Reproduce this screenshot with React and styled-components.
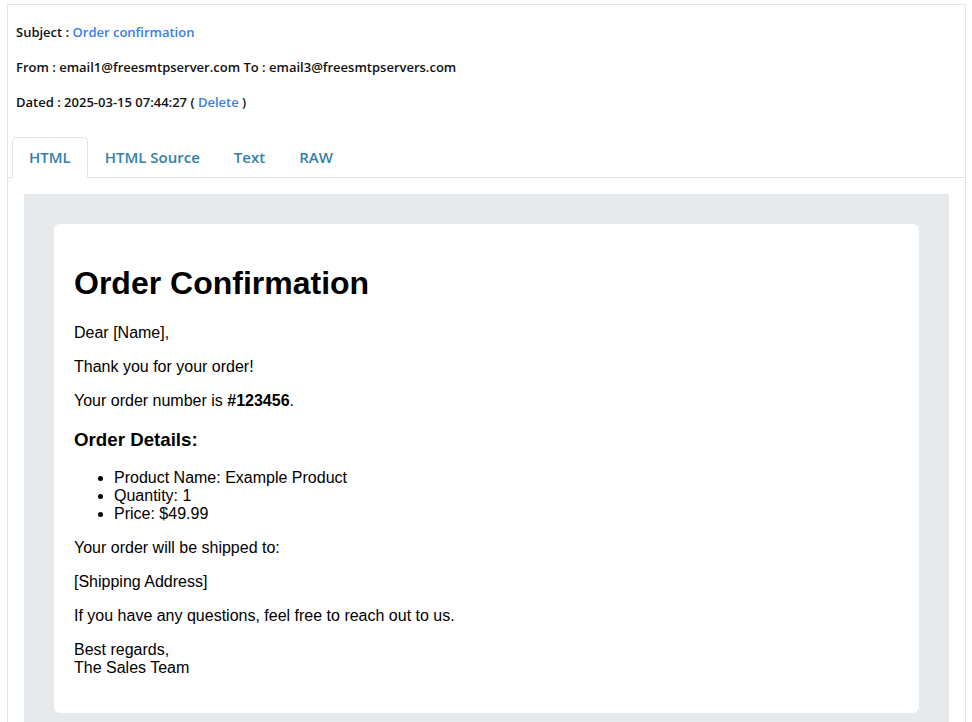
import React from "react";
import styled, { createGlobalStyle } from "styled-components";

const Global = createGlobalStyle`
  html, body { margin: 0; padding: 0; background: #fff; }
  body { font-family: "Open Sans", "Liberation Sans", sans-serif; }
  #root { padding: 4px 6px 0 7px; }
`;

const Panel = styled.div`
  border: 1px solid #e3e6e9;
  border-bottom: none;
  background: #fff;
`;

const Header = styled.div`
  padding: 10px 8px 0 8px;
  font-size: 13px;
  font-weight: 600;
  color: #111;
`;

const Line = styled.p`
  margin: 0;
  line-height: 35px;
  white-space: nowrap;
`;

const Link = styled.a`
  color: #3b7ded;
  text-decoration: none;
`;

const TabBar = styled.div`
  display: flex;
  margin-top: 17px;
  padding-left: 4px;
  border-bottom: 1px solid #e1e4e7;
`;

const Tab = styled.div`
  height: 41px;
  box-sizing: border-box;
  padding: 0 16px 1px 16px;
  display: flex;
  align-items: center;
  font-size: 15px;
  font-weight: 600;
  color: #3580a9;
  margin-bottom: -1px;
  border: 1px solid ${(p) => (p.$active ? "#e1e4e7" : "transparent")};
  border-bottom-color: ${(p) => (p.$active ? "#fff" : "transparent")};
  border-radius: 5px 5px 0 0;
  background: ${(p) => (p.$active ? "#fff" : "transparent")};
`;

const Body = styled.div`
  padding: 16px 16px 0 16px;
`;

const Frame = styled.div`
  background: #e7eaed;
  padding: 30px 30px 30px 30px;
`;

const Card = styled.div`
  background: #fff;
  border-radius: 6px;
  padding: 20px;
  font-family: "Liberation Sans", Arial, sans-serif;
  color: #000;
  font-size: 16px;
`;

const H1 = styled.h1`
  font-size: 32px;
  margin: 21.44px 0;
`;

const H3 = styled.h3`
  font-size: 18.72px;
  margin: 18.72px 0;
`;

const P = styled.p`
  margin: 16px 0;
`;

const List = styled.ul`
  margin: 16px 0;
  padding-left: 40px;
`;

export default function App() {
  const tabs = ["HTML", "HTML Source", "Text", "RAW"];
  return (
    <>
      <Global />
      <Panel>
        <Header>
          <Line>
            Subject : <Link href="#">Order confirmation</Link>
          </Line>
          <Line>From : email1@freesmtpserver.com To : email3@freesmtpservers.com</Line>
          <Line>
            Dated : 2025-03-15 07:44:27 ( <Link href="#">Delete</Link> )
          </Line>
        </Header>
        <TabBar>
          {tabs.map((t, i) => (
            <Tab key={t} $active={i === 0}>
              {t}
            </Tab>
          ))}
        </TabBar>
        <Body>
          <Frame>
            <Card>
              <H1>Order Confirmation</H1>
              <P>Dear [Name],</P>
              <P>Thank you for your order!</P>
              <P>
                Your order number is <strong>#123456</strong>.
              </P>
              <H3>Order Details:</H3>
              <List>
                <li>Product Name: Example Product</li>
                <li>Quantity: 1</li>
                <li>Price: $49.99</li>
              </List>
              <P>Your order will be shipped to:</P>
              <P>[Shipping Address]</P>
              <P>If you have any questions, feel free to reach out to us.</P>
              <P>
                Best regards,
                <br />
                The Sales Team
              </P>
            </Card>
          </Frame>
        </Body>
      </Panel>
    </>
  );
}
